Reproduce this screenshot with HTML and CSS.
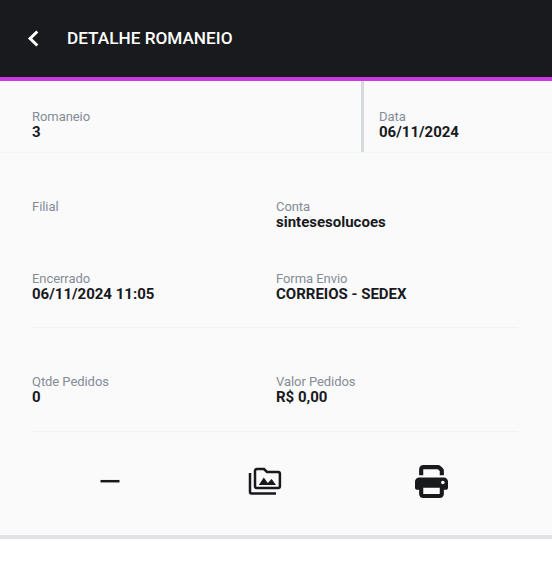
FILE: index.html
```html
<!DOCTYPE html>
<html lang="pt-BR">
<head>
<meta charset="utf-8">
<title>Detalhe Romaneio</title>
<link rel="stylesheet" href="styles.css">
</head>
<body>
<header class="topbar">
  <svg class="back" width="12" height="18" viewBox="0 0 12 18"><path d="M10.3 1.5 3.1 8.5l7.2 7"/></svg>
  <h1>DETALHE ROMANEIO</h1>
</header>
<main class="card">
  <section class="summary">
    <div class="field number"><span class="label">Romaneio</span><span class="value">3</span></div>
    <div class="field date"><span class="label">Data</span><span class="value">06/11/2024</span></div>
  </section>
  <section class="details">
    <div class="field"><span class="label">Filial</span><span class="value"></span></div>
    <div class="field"><span class="label">Conta</span><span class="value">sintesesolucoes</span></div>
    <div class="field"><span class="label">Encerrado</span><span class="value">06/11/2024 11:05</span></div>
    <div class="field"><span class="label">Forma Envio</span><span class="value">CORREIOS - SEDEX</span></div>
  </section>
  <section class="details totals">
    <div class="field"><span class="label">Qtde Pedidos</span><span class="value">0</span></div>
    <div class="field"><span class="label">Valor Pedidos</span><span class="value">R$ 0,00</span></div>
  </section>
  <nav class="actions">
    <svg width="34" height="34" viewBox="0 0 34 34"><path class="line" d="M7.5 17.2h19"/></svg>
    <svg width="34" height="34" viewBox="0 0 34 34"><path class="line" d="M2 9v19a1.4 1.4 0 0 0 1.4 1.4H28"/><path class="line" d="M8.7 5.1h7.3l3 2.9h11.2a1.7 1.7 0 0 1 1.7 1.7V22.3a1.7 1.7 0 0 1-1.7 1.7H8.7A1.7 1.7 0 0 1 7 22.3V6.8a1.7 1.7 0 0 1 1.7-1.7z"/><path d="m10.8 21 5-7.4 4 5.4 3.8-4 4.4 6z"/></svg>
    <svg class="print" width="33" height="33" viewBox="0 0 512 512"><path d="M128 0C92.7 0 64 28.7 64 64v96h64V64H354.7L384 93.3V160h64V93.3c0-17-6.7-33.3-18.7-45.3L400 18.7C388 6.7 371.7 0 354.7 0H128zM384 352v96H128V352H384zm64 32h32c17.7 0 32-14.3 32-32V256c0-35.3-28.7-64-64-64H64c-35.3 0-64 28.7-64 64v96c0 17.7 14.3 32 32 32H64v64c0 35.3 28.7 64 64 64H384c35.3 0 64-28.7 64-64V384z"/><circle class="light" cx="432" cy="272" r="28"/></svg>
  </nav>
</main>
</body>
</html>
```
FILE: styles.css
```css
* { box-sizing: border-box; }
body { margin: 0; background: #fff; color: #18191d; font-family: Roboto, "Liberation Sans", sans-serif; }
.topbar { display: flex; align-items: center; height: 81px; padding: 0 27px; background: #191a1e; border-bottom: 4px solid #cb39e5; }
.back { fill: none; stroke: #fff; stroke-width: 3; }
.topbar h1 { margin: 0 0 2px 28px; color: #fff; font-size: 17.2px; line-height: 24px; font-weight: 500; }
.card { height: 458px; background: #fafafb; border-bottom: 4px solid #e2e2e8; }
.summary { display: grid; grid-template-columns: 361px 1fr; height: 72px; border-bottom: 1px solid #f5f5f7; }
.field { display: flex; flex-direction: column; }
.number { padding: 28px 0 0 32px; }
.date { padding: 28px 0 0 15px; border-left: 3px solid #d6dadf; }
.label { color: #848c97; font-size: 13px; line-height: 16px; letter-spacing: -0.06px; }
.value { font-size: 15px; line-height: 15px; font-weight: 700; }
.details { display: grid; grid-template-columns: 244px 1fr; row-gap: 41px; height: 175px; margin: 0 34px 0 32px; padding-top: 46px; align-content: start; border-bottom: 1px solid #f3f3f5; }
.totals { height: 104px; padding-top: 46px; }
.actions { display: grid; grid-template-columns: 155px 167px 33px; align-items: center; height: 98px; padding-left: 93px; }
.actions .line { fill: none; stroke: #18191d; stroke-width: 2.5; }
.actions svg { fill: #18191d; }
.actions .light { fill: #fafafb; }
```
